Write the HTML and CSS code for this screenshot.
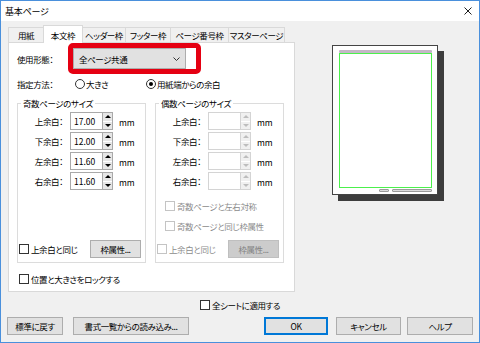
FILE: index.html
```html
<!DOCTYPE html>
<html lang="ja">
  <head>
    <meta charset="UTF-8" />
    <meta name="viewport" content="width=device-width, initial-scale=1.0" />
    <title>基本ページ</title>
    <link rel="stylesheet" href="styles.css">
  </head>
  <body>
    <div class="window">
      <div class="titlebar">
        <span class="title">基本ページ</span>
        <svg class="close" width="8" height="8" viewBox="0 0 8 8">
          <path d="M0.5 0.5 L7.5 7.5 M7.5 0.5 L0.5 7.5" stroke="#1e1e1e" stroke-width="1" fill="none" />
        </svg>
      </div>

      <div class="main">
        <div class="tabs">
          <div class="tab-strip">
            <div class="tab" style="width: 36px">用紙</div>
            <div class="tab active" style="width: 40px">本文枠</div>
            <div class="tab" style="width: 44px">ヘッダー枠</div>
            <div class="tab" style="width: 46px">フッター枠</div>
            <div class="tab" style="width: 59px">ページ番号枠</div>
            <div class="tab" style="width: 57px">マスターページ</div>
          </div>

          <div class="tab-panel">
            <div class="form-row usage">
              <span class="row-label">使用形態：</span>
              <div class="combo">
                <span>全ページ共通</span>
                <svg width="7" height="4" viewBox="0 0 7 4">
                  <path d="M0.5 0.5 L3.5 3.5 L6.5 0.5" stroke="#333" stroke-width="1" fill="none" />
                </svg>
                <div class="highlight"></div>
              </div>
            </div>

            <div class="form-row method">
              <span class="row-label">指定方法：</span>
              <label class="option first"><span class="radio"></span>大きさ</label>
              <label class="option"><span class="radio checked"></span>用紙端からの余白</label>
            </div>

            <div class="groups">
              <div class="group">
                <span class="group-title">奇数ページのサイズ</span>
                <div class="fields">
                  <div class="field">
                    <span class="field-label">上余白：</span>
                    <span class="input">17.00</span>
                    <span class="spin"><span class="up"></span><span class="down"></span></span>
                    <span class="unit">mm</span>
                  </div>
                  <div class="field">
                    <span class="field-label">下余白：</span>
                    <span class="input">12.00</span>
                    <span class="spin"><span class="up"></span><span class="down"></span></span>
                    <span class="unit">mm</span>
                  </div>
                  <div class="field">
                    <span class="field-label">左余白：</span>
                    <span class="input">11.60</span>
                    <span class="spin"><span class="up"></span><span class="down"></span></span>
                    <span class="unit">mm</span>
                  </div>
                  <div class="field">
                    <span class="field-label">右余白：</span>
                    <span class="input">11.60</span>
                    <span class="spin"><span class="up"></span><span class="down"></span></span>
                    <span class="unit">mm</span>
                  </div>
                </div>
                <div class="group-bottom">
                  <label class="check"><span class="box"></span>上余白と同じ</label>
                  <button class="btn small">枠属性...</button>
                </div>
              </div>

              <div class="group even">
                <span class="group-title">偶数ページのサイズ</span>
                <div class="fields">
                  <div class="field">
                    <span class="field-label">上余白：</span>
                    <span class="input"></span>
                    <span class="spin"><span class="up"></span><span class="down"></span></span>
                    <span class="unit">mm</span>
                  </div>
                  <div class="field">
                    <span class="field-label">下余白：</span>
                    <span class="input"></span>
                    <span class="spin"><span class="up"></span><span class="down"></span></span>
                    <span class="unit">mm</span>
                  </div>
                  <div class="field">
                    <span class="field-label">左余白：</span>
                    <span class="input"></span>
                    <span class="spin"><span class="up"></span><span class="down"></span></span>
                    <span class="unit">mm</span>
                  </div>
                  <div class="field">
                    <span class="field-label">右余白：</span>
                    <span class="input"></span>
                    <span class="spin"><span class="up"></span><span class="down"></span></span>
                    <span class="unit">mm</span>
                  </div>
                </div>
                <label class="check disabled sym"><span class="box"></span>奇数ページと左右対称</label>
                <label class="check disabled same"><span class="box"></span>奇数ページと同じ枠属性</label>
                <div class="group-bottom">
                  <label class="check disabled"><span class="box"></span>上余白と同じ</label>
                  <button class="btn small" disabled>枠属性...</button>
                </div>
              </div>
            </div>

            <label class="check lock"><span class="box"></span>位置と大きさをロックする</label>
          </div>
        </div>

        <div class="preview">
          <div class="sheet">
            <div class="sheet-shadow"></div>
            <div class="page">
              <div class="page-header"></div>
              <div class="page-body"></div>
              <div class="page-footer">
                <span class="foot-num"></span>
                <span class="foot-text"></span>
              </div>
            </div>
          </div>
        </div>
      </div>

      <div class="apply-row">
        <label class="check"><span class="box"></span>全シートに適用する</label>
      </div>

      <div class="button-row">
        <button class="btn reset">標準に戻す</button>
        <button class="btn load">書式一覧からの読み込み...</button>
        <button class="btn ok">OK</button>
        <button class="btn cancel">キャンセル</button>
        <button class="btn help">ヘルプ</button>
      </div>
    </div>
  </body>
</html>
```

FILE: styles.css
```css
* {
  box-sizing: border-box;
}
body {
  margin: 0;
  font-family: "Noto Sans CJK JP", "Noto Sans", sans-serif;
  font-size: 8.5px;
  letter-spacing: -0.4px;
  font-feature-settings: "palt";
  color: #000;
}
.window {
  width: 480px;
  height: 343px;
  border: 1px solid #4a90dc;
  background-color: #f0f0f0;
  display: flex;
  flex-direction: column;
}
.titlebar {
  height: 20px;
  background-color: #fff;
  display: flex;
  align-items: center;
  justify-content: space-between;
  padding: 0 7px 0 4px;
  font-size: 9px;
  letter-spacing: -0.2px;
}
.main {
  display: flex;
  padding: 4px 0 0 7px;
}
.tabs {
  width: 287px;
  flex-shrink: 0;
  display: flex;
  flex-direction: column;
}
.tab-strip {
  height: 17px;
  display: flex;
  align-items: flex-end;
}
.tab {
  height: 15px;
  margin-right: -1px;
  border: 1px solid #d9d9d9;
  border-bottom: none;
  background-color: #f0f0f0;
  display: flex;
  align-items: center;
  justify-content: center;
  white-space: nowrap;
}
.tab.active {
  height: 18px;
  margin-bottom: -1px;
  background-color: #fff;
  position: relative;
  z-index: 1;
}
.tab-panel {
  height: 250px;
  background-color: #fff;
  border: 1px solid #d9d9d9;
  padding: 5px 8px 0 8px;
}
.form-row {
  display: flex;
  align-items: center;
}
.usage .row-label {
  width: 56px;
}
.combo {
  position: relative;
  width: 113px;
  height: 21px;
  background-color: #e1e1e1;
  border: 1px solid #adadad;
  display: flex;
  align-items: center;
  justify-content: space-between;
  padding: 0 5px;
}
.highlight {
  position: absolute;
  left: -6px;
  top: -6px;
  right: -16px;
  bottom: -6px;
  border: 5px solid #e50012;
  border-radius: 5px;
}
.method {
  height: 12px;
  margin-top: 9px;
}
.method .row-label {
  width: 58px;
}
.option {
  display: flex;
  align-items: center;
}
.option.first {
  width: 71px;
}
.radio {
  width: 10px;
  height: 10px;
  border: 1px solid #333;
  border-radius: 50%;
  background-color: #fff;
  margin-right: 1px;
  display: flex;
  align-items: center;
  justify-content: center;
}
.radio.checked::before {
  content: "";
  width: 4px;
  height: 4px;
  border-radius: 50%;
  background-color: #000;
}
.groups {
  display: flex;
  gap: 9px;
  margin-top: 13px;
}
.group {
  width: 129px;
  height: 160px;
  border: 1px solid #dcdcdc;
  display: flex;
  flex-direction: column;
  padding: 0 4px 4px 0;
}
.group-title {
  align-self: flex-start;
  margin: -7px 0 0 3px;
  padding: 0 2px;
  line-height: 12px;
  background-color: #fff;
}
.fields {
  margin-top: 3px;
  display: flex;
  flex-direction: column;
  gap: 2px;
}
.field {
  height: 18px;
  display: flex;
  align-items: center;
}
.field-label {
  width: 45px;
  margin-right: 7px;
  text-align: right;
}
.input {
  width: 33px;
  height: 18px;
  border: 1px solid #a9a9a9;
  background-color: #fff;
  padding-left: 3px;
  line-height: 16px;
  letter-spacing: 0;
}
.spin {
  width: 10px;
  height: 18px;
  border: 1px solid #a9a9a9;
  border-left: none;
  display: flex;
  flex-direction: column;
}
.spin span {
  flex: 1;
  background-color: #e6e6e6;
  display: flex;
  align-items: center;
  justify-content: center;
}
.spin .up {
  border-bottom: 1px solid #fff;
}
.spin .up::before {
  content: "";
  border-left: 3px solid transparent;
  border-right: 3px solid transparent;
  border-bottom: 3px solid #000;
}
.spin .down::before {
  content: "";
  border-left: 3px solid transparent;
  border-right: 3px solid transparent;
  border-top: 3px solid #000;
}
.unit {
  margin-left: 6px;
  padding-top: 2px;
  letter-spacing: 0;
}
.even .input,
.even .spin {
  border-color: #d4d4d4;
}
.even .spin span {
  background-color: #f0f0f0;
}
.even .spin .up::before {
  border-bottom-color: #bdbdbd;
}
.even .spin .down::before {
  border-top-color: #bdbdbd;
}
.check {
  height: 12px;
  display: flex;
  align-items: center;
  white-space: nowrap;
}
.box {
  width: 10px;
  height: 10px;
  border: 1px solid #333;
  background-color: #fff;
  margin-right: 2px;
}
.check.disabled {
  color: #8c8c8c;
}
.check.disabled .box {
  border-color: #c4c4c4;
}
.sym {
  margin: 10px 0 0 9px;
}
.same {
  margin: 8px 0 0 9px;
}
.group-bottom {
  margin-top: auto;
  padding-left: 1px;
  display: flex;
  align-items: center;
  justify-content: space-between;
}
.btn {
  height: 18px;
  padding: 0;
  background-color: #e1e1e1;
  border: 1px solid #adadad;
  font-family: inherit;
  font-size: 8.5px;
  letter-spacing: inherit;
  font-feature-settings: "palt";
  color: #000;
  white-space: nowrap;
}
.btn.small {
  width: 51px;
}
.btn:disabled {
  background-color: #cccccc;
  border-color: #bfbfbf;
  color: #838383;
}
.lock {
  margin: 10px 0 0 2px;
}
.preview {
  padding: 20px 0 0 37px;
}
.sheet {
  display: grid;
  width: 112px;
  height: 156px;
}
.sheet-shadow {
  grid-area: 1 / 1;
  margin: 6px 0 0 6px;
  background-color: #3d3d3d;
}
.page {
  grid-area: 1 / 1;
  margin: 0 6px 6px 0;
  background-color: #fff;
  border: 1px solid #444;
  padding: 4px 5px 2px 6px;
  display: flex;
  flex-direction: column;
}
.page-header {
  height: 3px;
  background-color: #c5b7c7;
  border-radius: 1px;
}
.page-body {
  flex: 1;
  border: 1px solid #4cf04c;
}
.page-footer {
  height: 3px;
  margin-top: 1px;
  display: flex;
  justify-content: flex-end;
  gap: 3px;
}
.foot-num,
.foot-text {
  background-color: #dcdcdc;
  border: 1px solid #9a9a9a;
  border-radius: 1px;
}
.foot-num {
  width: 10px;
}
.foot-text {
  width: 40px;
}
.apply-row {
  height: 12px;
  margin-top: 7px;
  display: flex;
  justify-content: center;
}
.button-row {
  margin-top: 6px;
  padding: 0 6px;
  display: flex;
}
.reset {
  width: 56px;
}
.load {
  width: 116px;
  margin-left: 10px;
}
.ok {
  width: 64px;
  margin-left: auto;
  border: 2px solid #0078d7;
}
.cancel {
  width: 65px;
  margin-left: 8px;
}
.help {
  width: 66px;
  margin-left: 6px;
}
```
